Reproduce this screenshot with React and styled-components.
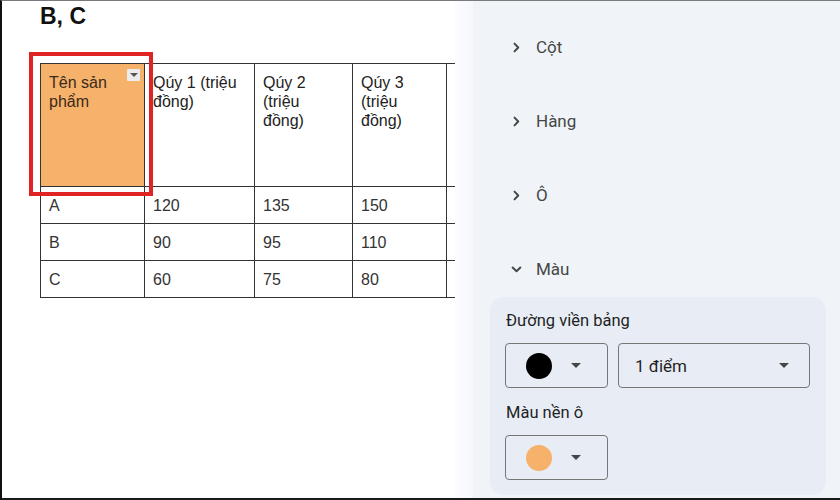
import React from 'react';
import styled, { createGlobalStyle } from 'styled-components';

const GlobalStyle = createGlobalStyle`
  html, body {
    margin: 0;
    padding: 0;
    background: #ffffff;
  }
`;

const rows = [
  ['A', '120', '135', '150', ''],
  ['B', '90', '95', '110', ''],
  ['C', '60', '75', '80', ''],
];

const headers = ['Qúy 1 (triệu đồng)', 'Qúy 2 (triệu đồng)', 'Qúy 3 (triệu đồng)', ''];

function Chevron({ open }) {
  return (
    <ChevronIcon viewBox='0 0 10 10' width='11' height='11'>
      {open ? (
        <path d='M1.5 3.2 L5 6.6 L8.5 3.2' />
      ) : (
        <path d='M3.2 1.5 L6.6 5 L3.2 8.5' />
      )}
    </ChevronIcon>
  );
}

function Caret() {
  return (
    <CaretIcon viewBox='0 0 10 5' width='10' height='5'>
      <path d='M0 0 L10 0 L5 5 Z' />
    </CaretIcon>
  );
}

function ColorButton({ color }) {
  return (
    <ColorSelect>
      <Swatch color={color} />
      <Caret />
    </ColorSelect>
  );
}

function App() {
  return (
    <>
      <GlobalStyle />
      <Frame>
        <Doc>
          <Title>B, C</Title>
          <Table>
            <colgroup>
              <col style={{ width: 104 }} />
              <col style={{ width: 110 }} />
              <col style={{ width: 98 }} />
              <col style={{ width: 94 }} />
              <col style={{ width: 110 }} />
            </colgroup>
            <thead>
              <tr>
                <HeadCell selected>
                  Tên sản phẩm
                  <CellMenu>
                    <MiniCaret />
                  </CellMenu>
                </HeadCell>
                {headers.map((h, i) => (
                  <HeadCell key={i}>{h}</HeadCell>
                ))}
              </tr>
            </thead>
            <tbody>
              {rows.map((r) => (
                <tr key={r[0]}>
                  {r.map((c, i) => (
                    <Cell key={i}>{c}</Cell>
                  ))}
                </tr>
              ))}
            </tbody>
          </Table>
        </Doc>
        <Fade />
        <Panel>
          <Section>
            <Chevron />
            <SectionLabel>Cột</SectionLabel>
          </Section>
          <Section>
            <Chevron />
            <SectionLabel>Hàng</SectionLabel>
          </Section>
          <Section>
            <Chevron />
            <SectionLabel>Ô</SectionLabel>
          </Section>
          <Section>
            <Chevron open />
            <SectionLabel>Màu</SectionLabel>
          </Section>
          <Card>
            <FieldLabel>Đường viền bảng</FieldLabel>
            <ControlRow>
              <ColorButton color='#000000' />
              <WidthSelect>
                <span>1 điểm</span>
                <Caret />
              </WidthSelect>
            </ControlRow>
            <FieldLabel spaced>Màu nền ô</FieldLabel>
            <ControlRow>
              <ColorButton color='#f6b26b' />
            </ControlRow>
          </Card>
        </Panel>
      </Frame>
    </>
  );
}

export default App;

const Frame = styled.div`
  width: 840px;
  height: 500px;
  box-sizing: border-box;
  border-top: 1px solid #7a7a7a;
  border-left: 2px solid #111111;
  border-bottom: 2px solid #1a1a1a;
  display: flex;
  overflow: hidden;
`;

const Doc = styled.div`
  width: 453px;
  flex-shrink: 0;
  overflow: hidden;
  padding-left: 38px;
  box-sizing: border-box;
  background: #ffffff;
  font-family: 'Liberation Sans', Arial, sans-serif;
  color: #222222;
`;

const Title = styled.div`
  font-size: 23px;
  font-weight: bold;
  color: #111111;
  line-height: 26px;
  padding-top: 2px;
  height: 34px;
  margin-bottom: 26px;
`;

const Table = styled.table`
  border-collapse: collapse;
  table-layout: fixed;
  width: 516px;
  font-size: 16px;
  line-height: 19px;
`;

const HeadCell = styled.td`
  position: relative;
  height: 123px;
  box-sizing: border-box;
  border: 1.5px solid #333333;
  padding: 9px 8px;
  vertical-align: top;
  background: ${(p) => (p.selected ? '#f6b26b' : '#ffffff')};
  color: ${(p) => (p.selected ? '#3a2a1a' : '#222222')};

  ${(p) =>
    p.selected &&
    `
    &::after {
      content: '';
      position: absolute;
      left: -12px;
      top: -12px;
      right: -9px;
      bottom: -10px;
      border: 4px solid #e02424;
      pointer-events: none;
      z-index: 2;
    }
  `}
`;

const CellMenu = styled.div`
  position: absolute;
  top: 5px;
  right: 4px;
  width: 13px;
  height: 12px;
  background: #ececec;
  border-radius: 1px;
  display: flex;
  align-items: center;
  justify-content: center;
`;

const MiniCaret = styled.div`
  width: 0;
  height: 0;
  border-left: 4px solid transparent;
  border-right: 4px solid transparent;
  border-top: 4px solid #555555;
`;

const Cell = styled.td`
  height: 37px;
  box-sizing: border-box;
  border: 1.5px solid #333333;
  padding: 0 8px;
  vertical-align: middle;
  color: #333333;
`;

const Fade = styled.div`
  width: 18px;
  flex-shrink: 0;
  background: linear-gradient(to right, #fbfcfe, #f6f8fc);
`;

const Panel = styled.div`
  flex: 1;
  background: #f0f3f8;
  padding: 9px 20px 3px 17px;
  display: flex;
  flex-direction: column;
  font-family: Roboto, 'Open Sans', sans-serif;
`;

const Section = styled.div`
  height: 74px;
  flex-shrink: 0;
  display: flex;
  align-items: center;
  padding-left: 21px;
  gap: 14px;
`;

const ChevronIcon = styled.svg`
  fill: none;
  stroke: #444746;
  stroke-width: 1.8;
  stroke-linecap: round;
  stroke-linejoin: round;
`;

const SectionLabel = styled.span`
  font-size: 17px;
  color: #444746;
`;

const Card = styled.div`
  margin-top: -9px;
  flex: 1;
  background: #e8edf5;
  border-radius: 14px;
  padding: 14px 16px 0;
`;

const FieldLabel = styled.div`
  font-size: 16.5px;
  line-height: 20px;
  color: #1f1f1f;
  margin-top: ${(p) => (p.spaced ? '15px' : '0')};
  margin-bottom: 12px;
`;

const ControlRow = styled.div`
  display: flex;
  gap: 10px;
  margin-left: -1px;
`;

const SelectBox = styled.div`
  height: 45px;
  box-sizing: border-box;
  border: 1px solid #747775;
  border-radius: 4px;
  display: flex;
  align-items: center;
`;

const ColorSelect = styled(SelectBox)`
  width: 103px;
  padding-left: 20px;
  gap: 19px;
`;

const WidthSelect = styled(SelectBox)`
  width: 192px;
  padding: 0 20px 0 16px;
  justify-content: space-between;
  font-size: 17px;
  color: #1f1f1f;
`;

const Swatch = styled.div`
  width: 26px;
  height: 26px;
  border-radius: 50%;
  background: ${(p) => p.color};
`;

const CaretIcon = styled.svg`
  fill: #444746;
`;
